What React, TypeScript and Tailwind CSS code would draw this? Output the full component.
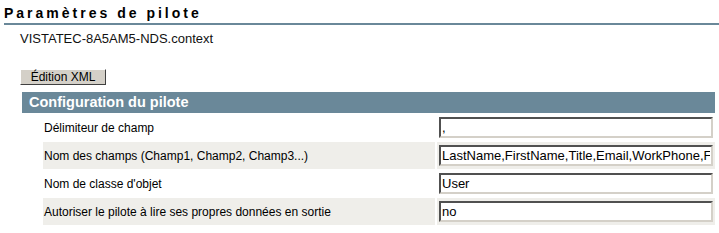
import React from 'react';

const rows = [
  { label: 'Délimiteur de champ', value: ',' },
  { label: 'Nom des champs (Champ1, Champ2, Champ3...)', value: 'LastName,FirstName,Title,Email,WorkPhone,Fax,Department' },
  { label: "Nom de classe d'objet", value: 'User' },
  { label: 'Autoriser le pilote à lire ses propres données en sortie', value: 'no' },
];

export default function App() {
  return (
    <div className="w-[719px] h-[233px] bg-white overflow-hidden font-['Liberation_Sans',Arial,sans-serif] text-black">
      {/* page title */}
      <div className="ml-[4px] h-[25px] border-b-2 border-[#6a8899]">
        <h1 className="pt-[5px] text-[14px] leading-[16px] font-bold tracking-[3px] text-black">Paramètres de pilote</h1>
      </div>

      <div className="pl-[20px] pt-[6px] text-[13px] leading-[16px] text-[#111]">VISTATEC-8A5AM5-NDS.context</div>

      <div className="pl-[20px] pt-[22px] flex">
        <button className="w-[86px] h-[16px] bg-[#d4d0c8] border border-t-white border-l-white border-r-[#404040] border-b-[#404040] text-[12px] leading-[12px] text-black">
          Édition XML
        </button>
      </div>

      {/* driver configuration */}
      <div className="ml-[22px] mt-[7px] w-[693px]">
        <div className="h-[21px] bg-[#6a8899] pl-[7px] text-[14.5px] leading-[21px] font-bold text-white">Configuration du pilote</div>
        <div className="pl-[21px] pt-[1px] flex flex-col gap-[1px]">
          {rows.map((row, i) => (
            <div key={row.label} className="flex gap-[2px] h-[27px]">
              <div className={`w-[392px] pl-[1px] flex items-center text-[12px] text-black ${i % 2 === 1 ? 'bg-[#efeeea]' : ''}`}>
                {row.label}
              </div>
              <div className={`flex-1 pl-[2px] pr-[2px] flex items-center ${i % 2 === 1 ? 'bg-[#efeeea]' : ''}`}>
                <input
                  readOnly
                  value={row.value}
                  className="w-full h-[21px] bg-white border-2 border-t-[#505050] border-l-[#505050] border-r-[#d4d0c8] border-b-[#d4d0c8] px-[1px] text-[13px] text-black outline-none font-['Liberation_Sans',Arial,sans-serif]"
                />
              </div>
            </div>
          ))}
        </div>
      </div>
    </div>
  );
}
